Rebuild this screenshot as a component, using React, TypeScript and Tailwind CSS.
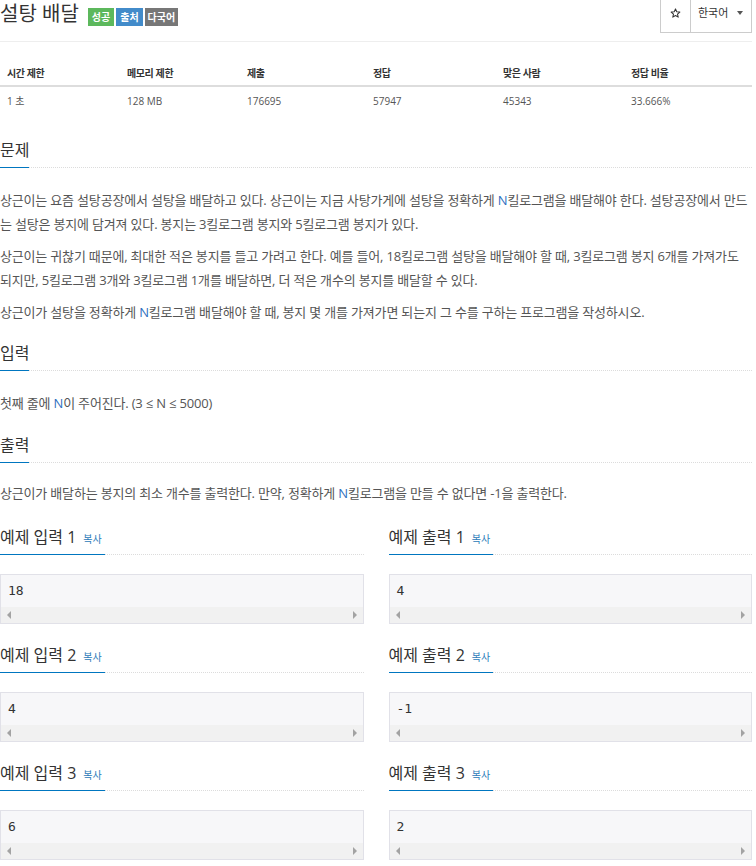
import type { ReactNode } from 'react'

const SANS = "font-['Open_Sans','Noto_Sans_CJK_KR',sans-serif]"
const MONO = "font-['DejaVu_Sans_Mono','Liberation_Mono',monospace]"

const INFO = [
  { label: '시간 제한', value: '1 초' },
  { label: '메모리 제한', value: '128 MB' },
  { label: '제출', value: '176695' },
  { label: '정답', value: '57947' },
  { label: '맞은 사람', value: '45343' },
  { label: '정답 비율', value: '33.666%' },
]

const SAMPLES = [
  { no: 1, input: '18', output: '4' },
  { no: 2, input: '4', output: '-1' },
  { no: 3, input: '6', output: '2' },
]

function Headline({ children, className = '' }: { children: ReactNode; className?: string }) {
  return (
    <div className={`flex border-b border-dotted border-[#dcdcdc] ${className}`}>
      <h2 className="-mb-px h-[29px] border-b border-[#0076c0] pb-[6px] text-[16px] leading-[22px] font-normal text-[#333]">
        {children}
      </h2>
    </div>
  )
}

function Var({ children }: { children: ReactNode }) {
  return <span className="text-[#2f6fc0]">{children}</span>
}

function SampleBox({ value }: { value: string }) {
  return (
    <div className="mt-[19px] border border-[#e1e1e8] bg-[#f7f7f9]">
      <pre className={`${MONO} h-[32px] px-[7px] text-[13px] leading-[32px] text-[#333]`}>{value}</pre>
      <div className="flex h-[16px] items-center justify-between bg-[#f1f1f1] px-[6px]">
        <svg width="5" height="8" viewBox="0 0 5 8">
          <path d="M4 0 L0 4 L4 8 Z" fill="#a3a3a3" />
        </svg>
        <svg width="5" height="8" viewBox="0 0 5 8">
          <path d="M1 0 L5 4 L1 8 Z" fill="#a3a3a3" />
        </svg>
      </div>
    </div>
  )
}

function Sample({ title, value }: { title: string; value: string }) {
  return (
    <div>
      <Headline>
        <span className="pr-[3px]">
          {title}
          <button type="button" className="ml-[7px] text-[10px] leading-[10px] text-[#2a7ab8]">
            복사
          </button>
        </span>
      </Headline>
      <SampleBox value={value} />
    </div>
  )
}

export default function App() {
  return (
    <div className={`${SANS} w-[752px] bg-white pb-[5px] text-[#555]`}>
      {/* Title row */}
      <div className="flex h-[42px] items-start justify-between border-b border-[#eee]">
        <div className="flex items-start">
          <h1 className="text-[20px] leading-[28px] font-normal text-[#333]">설탕 배달</h1>
          <div className="mt-[8px] ml-[9px] flex gap-[2px] text-[10px] leading-[18px] font-bold text-white">
            <span className="h-[18px] bg-[#5cb85c] px-[4px]">성공</span>
            <span className="h-[18px] bg-[#428bca] px-[4px]">출처</span>
            <span className="h-[18px] bg-[#777] px-[3px]">다국어</span>
          </div>
        </div>
        <div className="-mt-[7px] flex h-[40px] text-[#333]">
          <button type="button" className="flex w-[31px] items-center justify-center border border-[#ccc] bg-white">
            <svg width="11" height="10" viewBox="0 0 24 23">
              <path
                d="M12 2 L14.9 8.6 L22 9.3 L16.6 14 L18.2 21 L12 17.3 L5.8 21 L7.4 14 L2 9.3 L9.1 8.6 Z"
                fill="none"
                stroke="#333"
                strokeWidth="2.4"
                strokeLinejoin="round"
              />
            </svg>
          </button>
          <button
            type="button"
            className="-ml-px flex w-[62px] items-center border border-[#ccc] bg-white pl-[7px] text-[11px]"
          >
            한국어
            <span className="ml-[9px] h-0 w-0 border-x-[3px] border-t-[4px] border-x-transparent border-t-[#555]" />
          </button>
        </div>
      </div>

      {/* Problem info */}
      <div className="mt-[19px] text-[10px]">
        <div className="grid h-[26px] grid-cols-[120px_120px_126px_130px_128px_1fr] border-b-2 border-[#ddd] leading-[24px] font-bold text-[#333]">
          {INFO.map((i) => (
            <div key={i.label} className="pl-[7px] tracking-[-0.4px]">
              {i.label}
            </div>
          ))}
        </div>
        <div className="grid h-[28px] grid-cols-[120px_120px_126px_130px_128px_1fr] leading-[28px]">
          {INFO.map((i) => (
            <div key={i.label} className="pl-[7px]">
              {i.value}
            </div>
          ))}
        </div>
      </div>

      {/* 문제 */}
      <Headline className="mt-[24px]">문제</Headline>
      <div className="mt-[20px] text-[13px] leading-[24px] tracking-[-0.18px]">
        <p className="mb-2">
          상근이는 요즘 설탕공장에서 설탕을 배달하고 있다. 상근이는 지금 사탕가게에 설탕을 정확하게 <Var>N</Var>킬로그램을
          배달해야 한다. 설탕공장에서 만드는 설탕은 봉지에 담겨져 있다. 봉지는 3킬로그램 봉지와 5킬로그램 봉지가 있다.
        </p>
        <p className="mb-2">
          상근이는 귀찮기 때문에, 최대한 적은 봉지를 들고 가려고 한다. 예를 들어, 18킬로그램 설탕을 배달해야 할 때,
          3킬로그램 봉지 6개를 가져가도 되지만, 5킬로그램 3개와 3킬로그램 1개를 배달하면, 더 적은 개수의 봉지를 배달할 수
          있다.
        </p>
        <p>
          상근이가 설탕을 정확하게 <Var>N</Var>킬로그램 배달해야 할 때, 봉지 몇 개를 가져가면 되는지 그 수를 구하는
          프로그램을 작성하시오.
        </p>
      </div>

      {/* 입력 */}
      <Headline className="mt-[18px]">입력</Headline>
      <div className="mt-[20px] text-[13px] leading-[24px] tracking-[-0.18px]">
        <p>
          첫째 줄에 <Var>N</Var>이 주어진다. (3 ≤ N ≤ 5000)
        </p>
      </div>

      {/* 출력 */}
      <Headline className="mt-[19px]">출력</Headline>
      <div className="mt-[18px] text-[13px] leading-[24px] tracking-[-0.18px]">
        <p>
          상근이가 배달하는 봉지의 최소 개수를 출력한다. 만약, 정확하게 <Var>N</Var>킬로그램을 만들 수 없다면 -1을 출력한다.
        </p>
      </div>

      {/* 예제 */}
      <div className="mt-[21px] grid grid-cols-2 gap-x-[25px] gap-y-[20px]">
        {SAMPLES.map((s) => [
          <Sample key={`in${s.no}`} title={`예제 입력 ${s.no}`} value={s.input} />,
          <Sample key={`out${s.no}`} title={`예제 출력 ${s.no}`} value={s.output} />,
        ])}
      </div>
    </div>
  )
}
